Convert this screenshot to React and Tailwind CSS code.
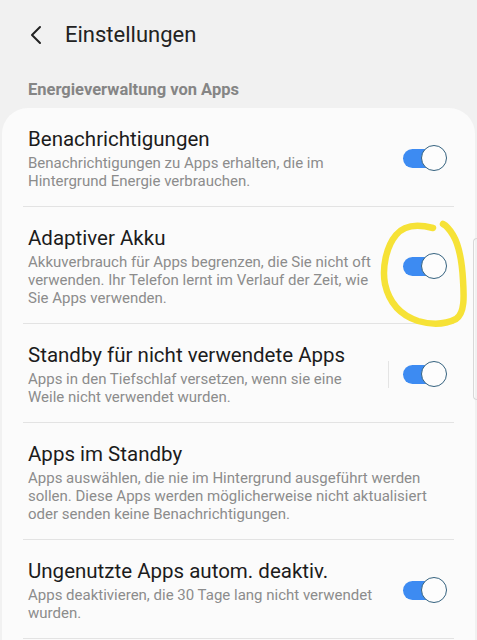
import React from "react";

function Toggle() {
  return (
    <div className="relative w-[44px] h-[26px] shrink-0">
      <div className="absolute left-0 top-[4px] w-[38px] h-[19px] rounded-full bg-[#3d8bf2]" />
      <div className="absolute right-0 top-0 w-[26px] h-[26px] rounded-full bg-[#fdfdfd] border-[1.5px] border-[#35627f]" />
    </div>
  );
}

function Row({ title, lines, toggle, sep, last }) {
  return (
    <div className="relative">
      <div className="flex items-center pl-[26px] pr-[28px] pt-[18px] pb-[16px]">
        <div className="flex-1 min-w-0">
          <div className="text-[20.5px] leading-[26px] text-[#1c1c1c]">{title}</div>
          <div className="text-[15px] leading-[18px] text-[#8c8c8c] mt-[2px]">
            {lines.map((l, i) => (
              <div key={i} className="whitespace-nowrap">{l}</div>
            ))}
          </div>
        </div>
        {sep && <div className="w-px h-[27px] bg-[#e4e4e4] mr-[14px]" />}
        {toggle && <Toggle />}
      </div>
      {!last && <div className="mx-[21px] h-px bg-[#e3e3e3]" />}
    </div>
  );
}

export default function App() {
  return (
    <div className="relative w-[477px] h-[640px] overflow-hidden bg-[#f1f1f1]" style={{ fontFamily: "Roboto, 'Noto Sans', sans-serif" }}>
      <div className="flex items-center h-[68px] pl-[28px] pt-[1px]">
        <svg width="16" height="20" viewBox="0 0 16 20" className="mr-[21px]">
          <path d="M12 2 L4 10 L12 18" fill="none" stroke="#222" strokeWidth="2" strokeLinecap="round" strokeLinejoin="round" />
        </svg>
        <span className="text-[22px] text-[#222]">Einstellungen</span>
      </div>
      <div className="pl-[28px] pt-[10px] h-[40px] text-[16.5px] font-bold text-[#858585]">Energieverwaltung von Apps</div>
      <div className="mx-[2px] rounded-t-[26px] bg-[#fbfbfb] h-[540px]">
        <Row title="Benachrichtigungen" lines={["Benachrichtigungen zu Apps erhalten, die im", "Hintergrund Energie verbrauchen."]} toggle />
        <Row title="Adaptiver Akku" lines={["Akkuverbrauch für Apps begrenzen, die Sie nicht oft", "verwenden. Ihr Telefon lernt im Verlauf der Zeit, wie", "Sie Apps verwenden."]} toggle />
        <Row title="Standby für nicht verwendete Apps" lines={["Apps in den Tiefschlaf versetzen, wenn sie eine", "Weile nicht verwendet wurden."]} toggle sep />
        <Row title="Apps im Standby" lines={["Apps auswählen, die nie im Hintergrund ausgeführt werden", "sollen. Diese Apps werden möglicherweise nicht aktualisiert", "oder senden keine Benachrichtigungen."]} />
        <Row title="Ungenutzte Apps autom. deaktiv." lines={["Apps deaktivieren, die 30 Tage lang nicht verwendet", "wurden."]} toggle />
      </div>
      <div className="absolute right-0 top-[238px] w-[4px] h-[162px] rounded-l-[4px] border border-r-0 border-[#d8d8d8]" />
      <svg className="absolute left-0 top-0 pointer-events-none" width="477" height="640" viewBox="0 0 477 640">
        <path d="M433 228 C 418 224, 404 225, 396 235 C 386 247, 382 268, 385 284 C 389 302, 400 315, 418 321 C 432 325, 446 324, 456 319 C 465 313, 464 296, 463 280 C 462 262, 459 245, 453 235 C 450 230, 447 226, 443 224" fill="none" stroke="#f6e236" strokeWidth="6.5" strokeLinecap="round" strokeLinejoin="round" />
      </svg>
    </div>
  );
}
